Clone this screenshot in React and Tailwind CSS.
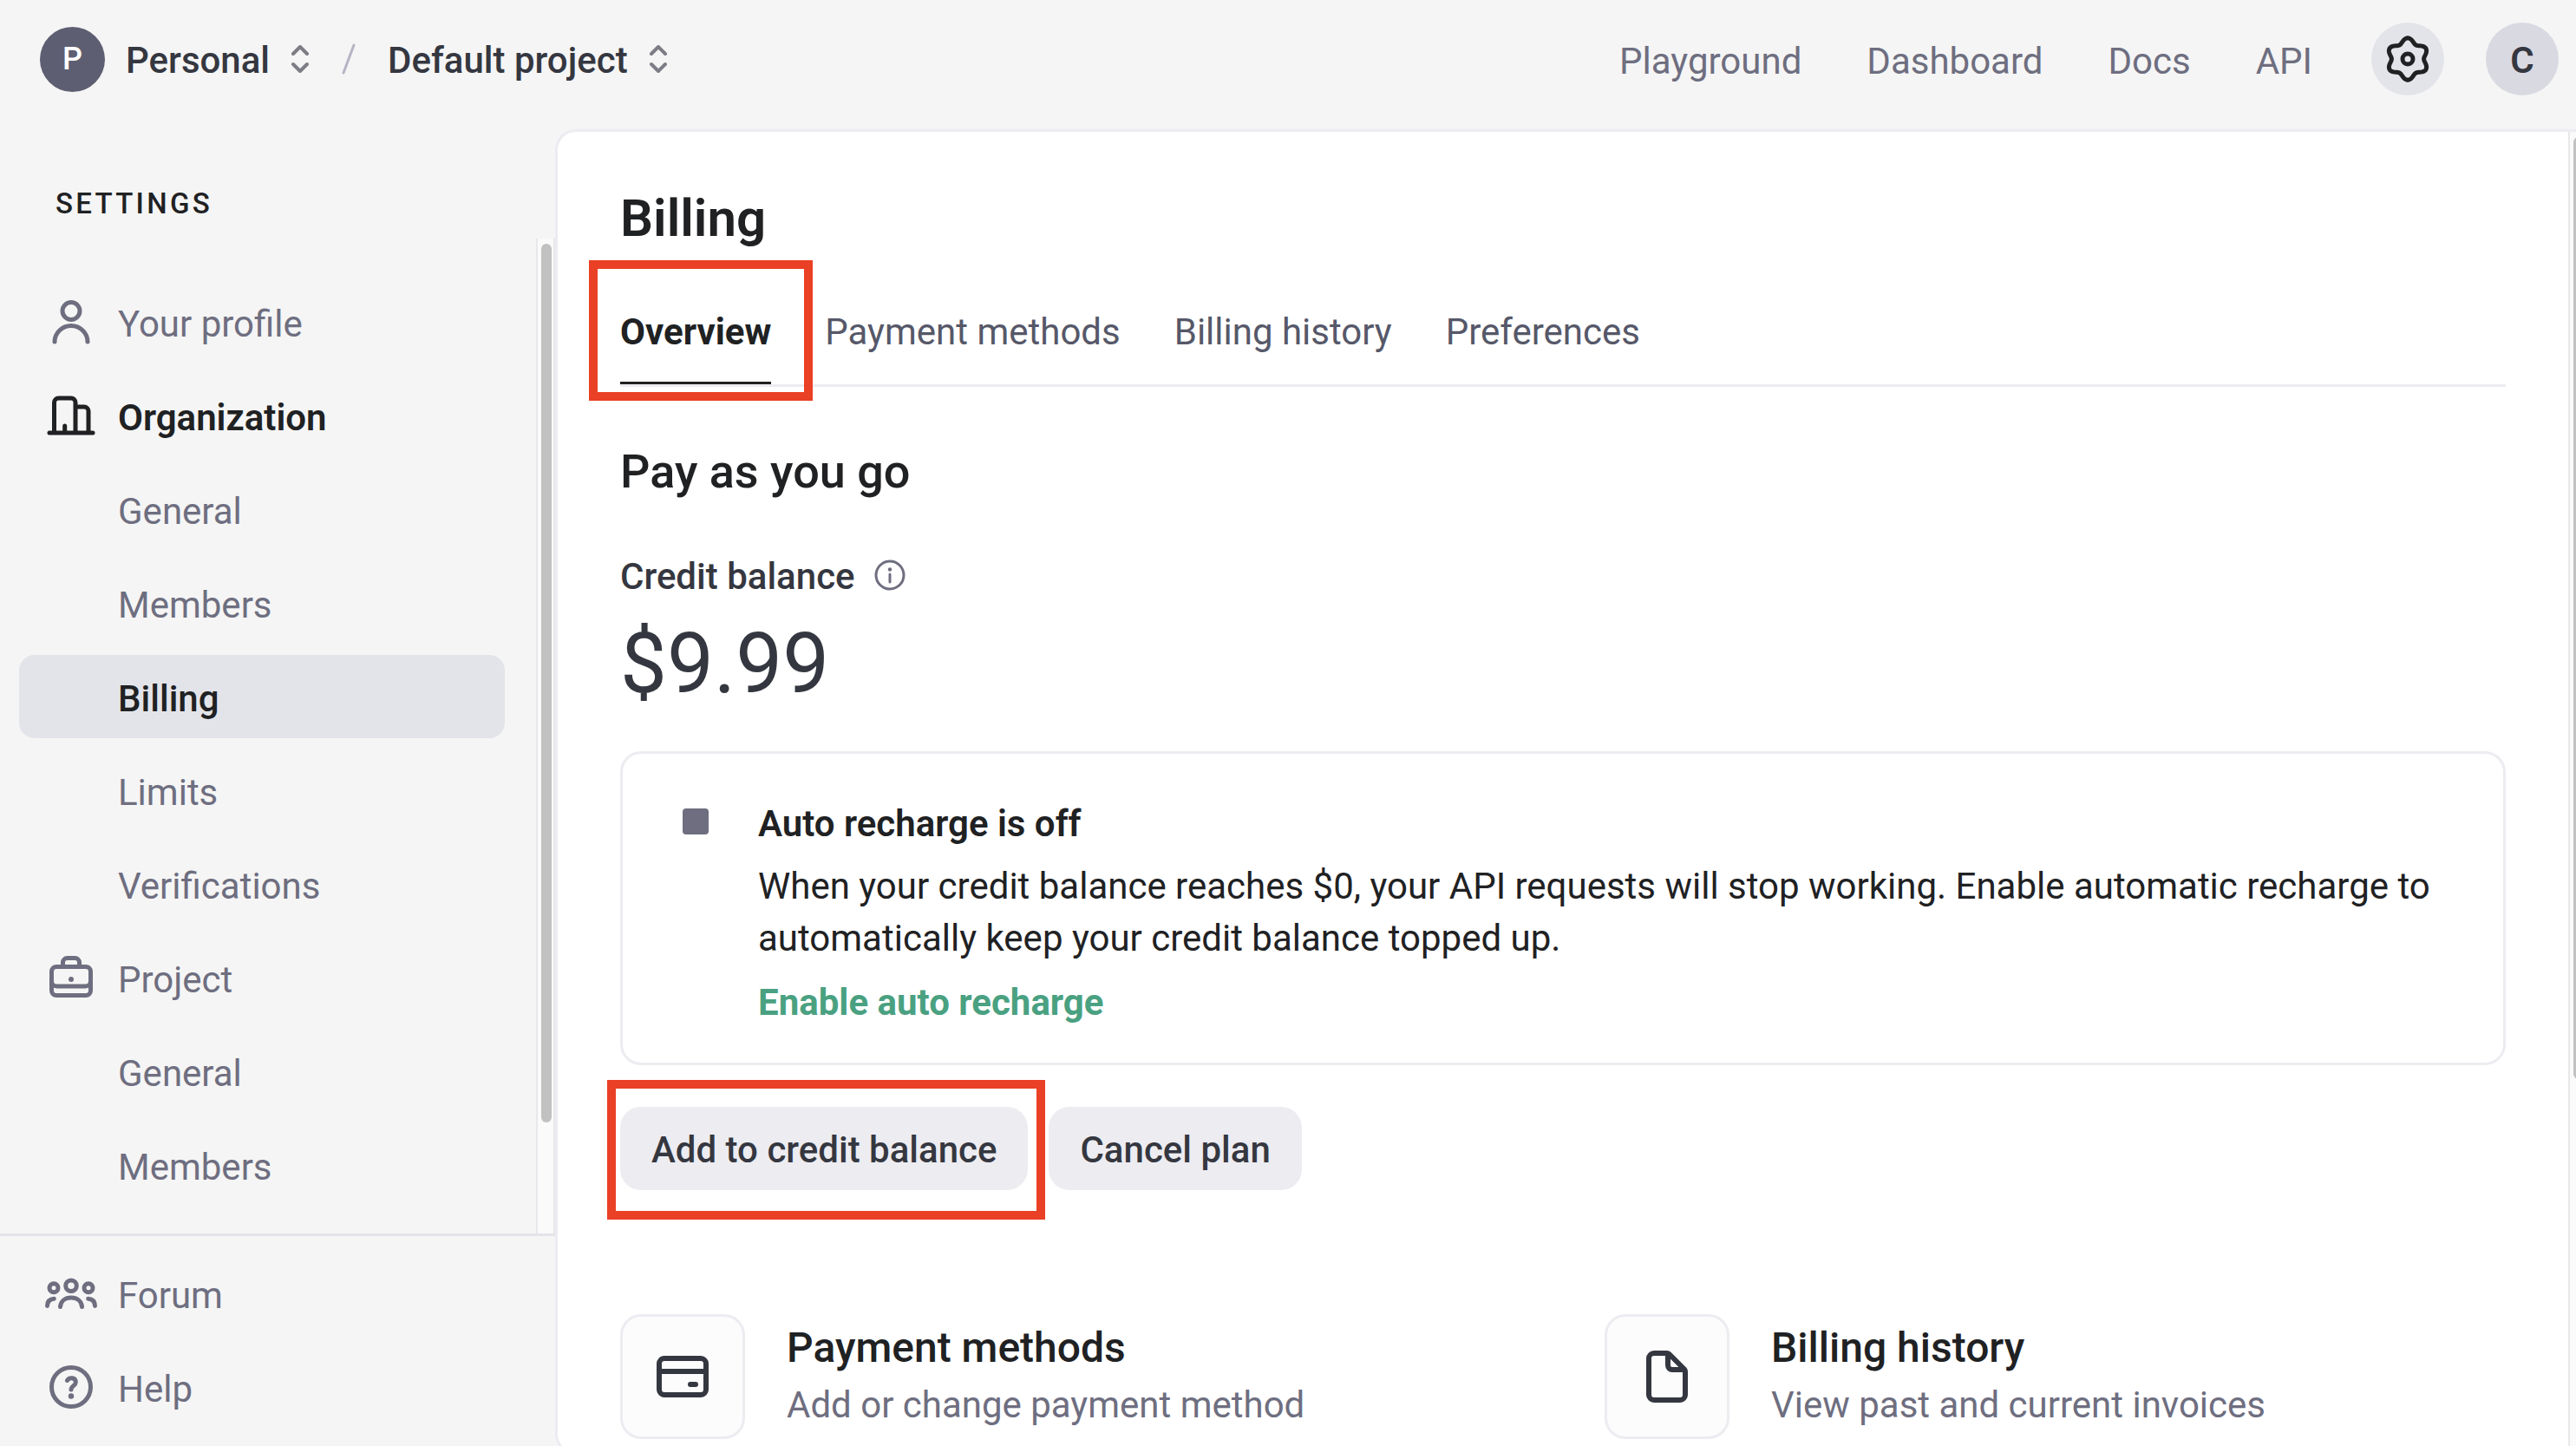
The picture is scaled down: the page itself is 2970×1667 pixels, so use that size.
import React from "react";

function Glyph({ size = "size-[60px]", box = "0 0 60 60", width = 5, children }) {
  return (
    <svg
      className={`${size} shrink-0`}
      viewBox={box}
      fill="none"
      stroke="currentColor"
      strokeWidth={width}
      strokeLinecap="round"
      strokeLinejoin="round"
      aria-hidden="true"
    >
      {children}
    </svg>
  );
}

const ProfileIcon = () => (
  <Glyph>
    <circle cx="30" cy="17.5" r="10" />
    <path d="M11 53a19 18.5 0 0 1 38 0" />
  </Glyph>
);

const BuildingIcon = () => (
  <Glyph>
    <path d="M5 50h50M10.5 50V15a5 5 0 0 1 5-5H30a5 5 0 0 1 5 5v35M35 20h10a5 5 0 0 1 5 5v25M22.7 42v8" />
  </Glyph>
);

const BriefcaseIcon = () => (
  <Glyph>
    <rect x="7.5" y="17.5" width="45" height="33" rx="5.5" />
    <path d="M20.5 17v-4.5a5 5 0 0 1 5-5h9a5 5 0 0 1 5 5V17M7.5 34a6 6 0 0 0 6 6h33a6 6 0 0 0 6-6" />
    <circle cx="30" cy="32" r="3" fill="currentColor" stroke="none" />
  </Glyph>
);

const ForumIcon = () => (
  <Glyph>
    <circle cx="30" cy="21.3" r="6.3" />
    <circle cx="10" cy="23.7" r="5" />
    <circle cx="50" cy="23.7" r="5" />
    <path d="M17.5 45.5C18 39 23 35 30 35s12 4 12.5 10.5M10.3 36.2C5.5 36.5 2.6 39.5 2.5 44.5M49.7 36.2c4.8.3 7.7 3.3 7.8 8.3" />
  </Glyph>
);

const HelpIcon = () => (
  <Glyph>
    <circle cx="30" cy="30" r="22.5" />
    <path d="M25.5 22.5c2.5-4.5 9.8-3.3 9.8 2 0 4-5.3 4.3-5.3 8.5" />
    <circle cx="30" cy="40.5" r="3.2" fill="currentColor" stroke="none" />
  </Glyph>
);

const ChevronsIcon = () => (
  <Glyph size="h-8 w-[22px]" box="0 0 22 32" width={4}>
    <path d="M3 10l8-8 8 8M3 22l8 8 8-8" />
  </Glyph>
);

const InfoIcon = () => (
  <Glyph size="size-9" box="0 0 36 36" width={3}>
    <circle cx="18" cy="18" r="16" />
    <path d="M18 17v9" />
    <circle cx="18" cy="11.5" r="2.2" fill="currentColor" stroke="none" />
  </Glyph>
);

const CardIcon = () => (
  <Glyph width={6}>
    <rect x="3" y="9" width="54" height="42" rx="6" />
    <path d="M3 24h54M39 39h6" />
  </Glyph>
);

const FileIcon = () => (
  <Glyph width={6}>
    <path d="M15 3h14.5a5 5 0 0 1 3.5 1.5L49.5 21a5 5 0 0 1 1.5 3.5V51a6 6 0 0 1-6 6H15a6 6 0 0 1-6-6V9a6 6 0 0 1 6-6z" />
    <path d="M31 4v13a5 5 0 0 0 5 5h14" />
  </Glyph>
);

// Six-lobed outline sampled as a polar curve around the icon's centre.
const gearOutline =
  Array.from({ length: 120 }, (_, i) => {
    const a = (i / 120) * Math.PI * 2;
    const r = 21.4 + 2.8 * Math.cos(6 * a);
    return `${i ? "L" : "M"}${(30 + r * Math.sin(a)).toFixed(2)} ${(30 - r * Math.cos(a)).toFixed(2)}`;
  }).join("") + "Z";

const GearIcon = () => (
  <Glyph>
    <path d={gearOutline} />
    <circle cx="30" cy="30" r="6" />
  </Glyph>
);

function NavItem({ icon, label, strong, active }) {
  return (
    <li>
      <a
        href="#"
        aria-current={active ? "page" : undefined}
        className={`flex h-24 items-center gap-6 rounded-[18px] pl-[30px] ${
          active ? "bg-[#e3e4e9]" : ""
        } ${strong || active ? "text-[#202123]" : "text-[#6e6e80]"}`}
      >
        <span className="flex w-[60px] shrink-0">{icon}</span>
        <span className={`pt-1.5 ${strong ? "font-semibold" : active ? "font-medium" : ""}`}>{label}</span>
      </a>
    </li>
  );
}

function Switcher({ label }) {
  return (
    <button type="button" className="flex items-center gap-6 font-medium text-[#353740]">
      <span className="pt-1">{label}</span>
      <span className="text-[#7d7d86]">
        <ChevronsIcon />
      </span>
    </button>
  );
}

function Tab({ selected, children }) {
  return (
    <button
      type="button"
      role="tab"
      aria-selected={selected ? "true" : "false"}
      className={`border-b-3 pb-[27px] ${selected ? "border-[#202123] font-bold text-[#202123]" : "border-transparent"}`}
    >
      {children}
    </button>
  );
}

function LinkTile({ icon, title, text }) {
  return (
    <a href="#" className="flex items-center gap-12">
      <span className="flex size-36 shrink-0 items-center justify-center rounded-3xl border-3 border-[#ececf1] bg-[#fcfcfc] text-[#353740]">
        {icon}
      </span>
      <span className="flex flex-col leading-[66px]">
        <span className="text-[48px] font-medium text-[#202123]">{title}</span>
        <span className="text-[#6e6e80]">{text}</span>
      </span>
    </a>
  );
}

export default function App() {
  return (
    <div className="flex h-screen flex-col overflow-hidden bg-[#f5f5f5] font-['Roboto',sans-serif] text-[42px] leading-[60px] text-[#202123]">
      <header className="flex h-[149px] shrink-0 items-center justify-between pr-5 pb-[13px] pl-[46px]">
        <div className="flex items-center gap-[37px]">
          <div className="flex items-center gap-6">
            <span className="flex size-[75px] items-center justify-center rounded-full bg-[#5d5e72] text-[36px] font-medium text-white">
              P
            </span>
            <Switcher label="Personal" />
          </div>
          <Glyph size="h-9 w-4" box="0 0 16 36" width={3}>
            <path d="M14 2L2 34" stroke="#b4b4c4" />
          </Glyph>
          <Switcher label="Default project" />
        </div>
        <div className="flex items-center gap-[68px]">
          <nav className="flex gap-[75px] pt-1.5 text-[#6e6e80]">
            <a href="#">Playground</a>
            <a href="#">Dashboard</a>
            <a href="#">Docs</a>
            <a href="#">API</a>
          </nav>
          <div className="flex gap-12">
            <button
              type="button"
              aria-label="Settings"
              className="flex size-[84px] items-center justify-center rounded-full bg-[#e3e4e9]"
            >
              <GearIcon />
            </button>
            <button
              type="button"
              className="flex size-[84px] items-center justify-center rounded-full bg-[#d9d9e2] pt-1 font-semibold text-[#353740]"
            >
              C
            </button>
          </div>
        </div>
      </header>

      <div className="flex min-h-0 flex-1">
        <aside className="flex w-[640px] shrink-0 flex-col">
          <h2 className="px-16 pt-[62px] pb-4 text-[33px] leading-[48px] font-medium tracking-widest">SETTINGS</h2>
          <div className="flex min-h-0 flex-1">
            <ul className="flex flex-1 flex-col gap-3 overflow-hidden pt-12 pr-9 pl-[22px]">
              <NavItem icon={<ProfileIcon />} label="Your profile" />
              <NavItem icon={<BuildingIcon />} label="Organization" strong />
              <NavItem label="General" />
              <NavItem label="Members" />
              <NavItem label="Billing" active />
              <NavItem label="Limits" />
              <NavItem label="Verifications" />
              <NavItem icon={<BriefcaseIcon />} label="Project" />
              <NavItem label="General" />
              <NavItem label="Members" />
            </ul>
            <div className="flex w-[22px] flex-col border-x-2 border-[#e8e8ec] bg-[#fafafa] pt-1.5 pr-0.5 pb-32 pl-1">
              <div className="flex-1 rounded-full bg-[#c1c1c1]" />
            </div>
          </div>
          <ul className="flex flex-col gap-3 border-t-3 border-[#e3e3e9] pt-[18px] pr-9 pb-5 pl-[22px]">
            <NavItem icon={<ForumIcon />} label="Forum" />
            <NavItem icon={<HelpIcon />} label="Help" />
          </ul>
        </aside>

        <main className="-mb-2.5 flex min-w-0 flex-1 overflow-hidden rounded-l-3xl border-3 border-r-0 border-[#ececf1] bg-white">
          <div className="min-w-0 flex-1 px-[72px] pt-16">
            <h1 className="text-[60px] leading-[72px] font-semibold">Billing</h1>

            <div role="tablist" className="mt-[65px] flex gap-[62px] border-b-3 border-[#ececf1] text-[#565869]">
              <div className="relative">
                <Tab selected>Overview</Tab>
                <span className="pointer-events-none absolute -top-[53px] -left-9 h-[162px] w-[258px] border-10 border-[#ea4025]" />
              </div>
              <Tab>Payment methods</Tab>
              <Tab>Billing history</Tab>
              <Tab>Preferences</Tab>
            </div>

            <h2 className="mt-[66px] text-[54px] leading-[64px] font-medium">Pay as you go</h2>
            <div className="mt-[59px] flex items-center gap-[22px] font-medium text-[#353740]">
              Credit balance
              <span className="pb-1 text-[#6e6e80]">
                <InfoIcon />
              </span>
            </div>
            <p className="mt-[22px] text-[96px] leading-[96px] text-[#353740]">$9.99</p>

            <section className="mt-[53px] flex gap-[57px] rounded-3xl border-3 border-[#ececf1] px-[69px] pt-[51px] pb-[39px]">
              <span className="mt-3 size-[30px] shrink-0 rounded-sm bg-[#6e6e80]" />
              <div>
                <h3 className="font-semibold">Auto recharge is off</h3>
                <p className="mt-3">
                  When your credit balance reaches $0, your API requests will stop working. Enable automatic recharge
                  to automatically keep your credit balance topped up.
                </p>
                <a href="#" className="mt-3.5 block font-bold text-[#4aa181]">
                  Enable auto recharge
                </a>
              </div>
            </section>

            <div className="mt-12 flex gap-6 font-medium text-[#353740]">
              <div className="relative">
                <button type="button" className="h-24 rounded-3xl bg-[#ececf1] px-9 pt-1">Add to credit balance</button>
                <span className="pointer-events-none absolute -top-[31px] -left-[15px] h-[161px] w-[505px] border-10 border-[#ea4025]" />
              </div>
              <button type="button" className="h-24 rounded-3xl bg-[#ececf1] px-9 pt-1">Cancel plan</button>
            </div>

            <div className="mt-[143px] grid grid-cols-2 gap-24">
              <LinkTile icon={<CardIcon />} title="Payment methods" text="Add or change payment method" />
              <LinkTile icon={<FileIcon />} title="Billing history" text="View past and current invoices" />
            </div>
          </div>
          <div className="flex w-[9px] shrink-0 flex-col overflow-hidden border-l-2 border-[#e8e8e8] bg-[#fafafa] pt-1.5 pb-[430px] pl-1">
            <div className="w-3 flex-1 rounded-full bg-[#c1c1c1]" />
          </div>
        </main>
      </div>
    </div>
  );
}
